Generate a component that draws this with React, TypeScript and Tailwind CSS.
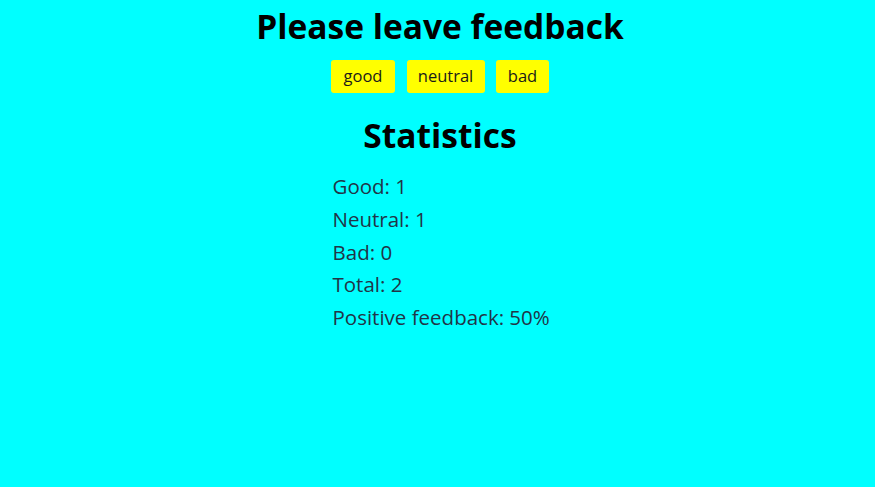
export default function App() {
  const stats = [
    "Good: 1",
    "Neutral: 1",
    "Bad: 0",
    "Total: 2",
    "Positive feedback: 50%",
  ];
  const buttons = [
    { label: "good", w: "w-[64px]" },
    { label: "neutral", w: "w-[78px]" },
    { label: "bad", w: "w-[53px]" },
  ];
  return (
    <div
      className="min-h-[487px] w-full bg-[#00ffff] flex flex-col items-center"
      style={{ fontFamily: '"Open Sans", "Noto Sans", sans-serif' }}
    >
      <h1 className="mt-[5px] ml-[5px] text-[33.5px] leading-[42px] font-bold text-black">
        Please leave feedback
      </h1>
      <div className="mt-[13px] flex gap-[11.5px] ml-[5px]">
        {buttons.map((b) => (
          <button
            key={b.label}
            className={`${b.w} h-[33px] bg-[#ffff00] rounded-[3px] text-[16.5px] text-[#1a1a1a]`}
          >
            {b.label}
          </button>
        ))}
      </div>
      <h2 className="mt-[21px] ml-[5px] text-[33.5px] leading-[42px] font-bold text-black">
        Statistics
      </h2>
      <div className="mt-[14px] ml-[8px] flex flex-col text-[20.5px] leading-[32.75px] text-[#213547] w-[218px]">
        {stats.map((s) => (
          <p key={s}>{s}</p>
        ))}
      </div>
    </div>
  );
}
